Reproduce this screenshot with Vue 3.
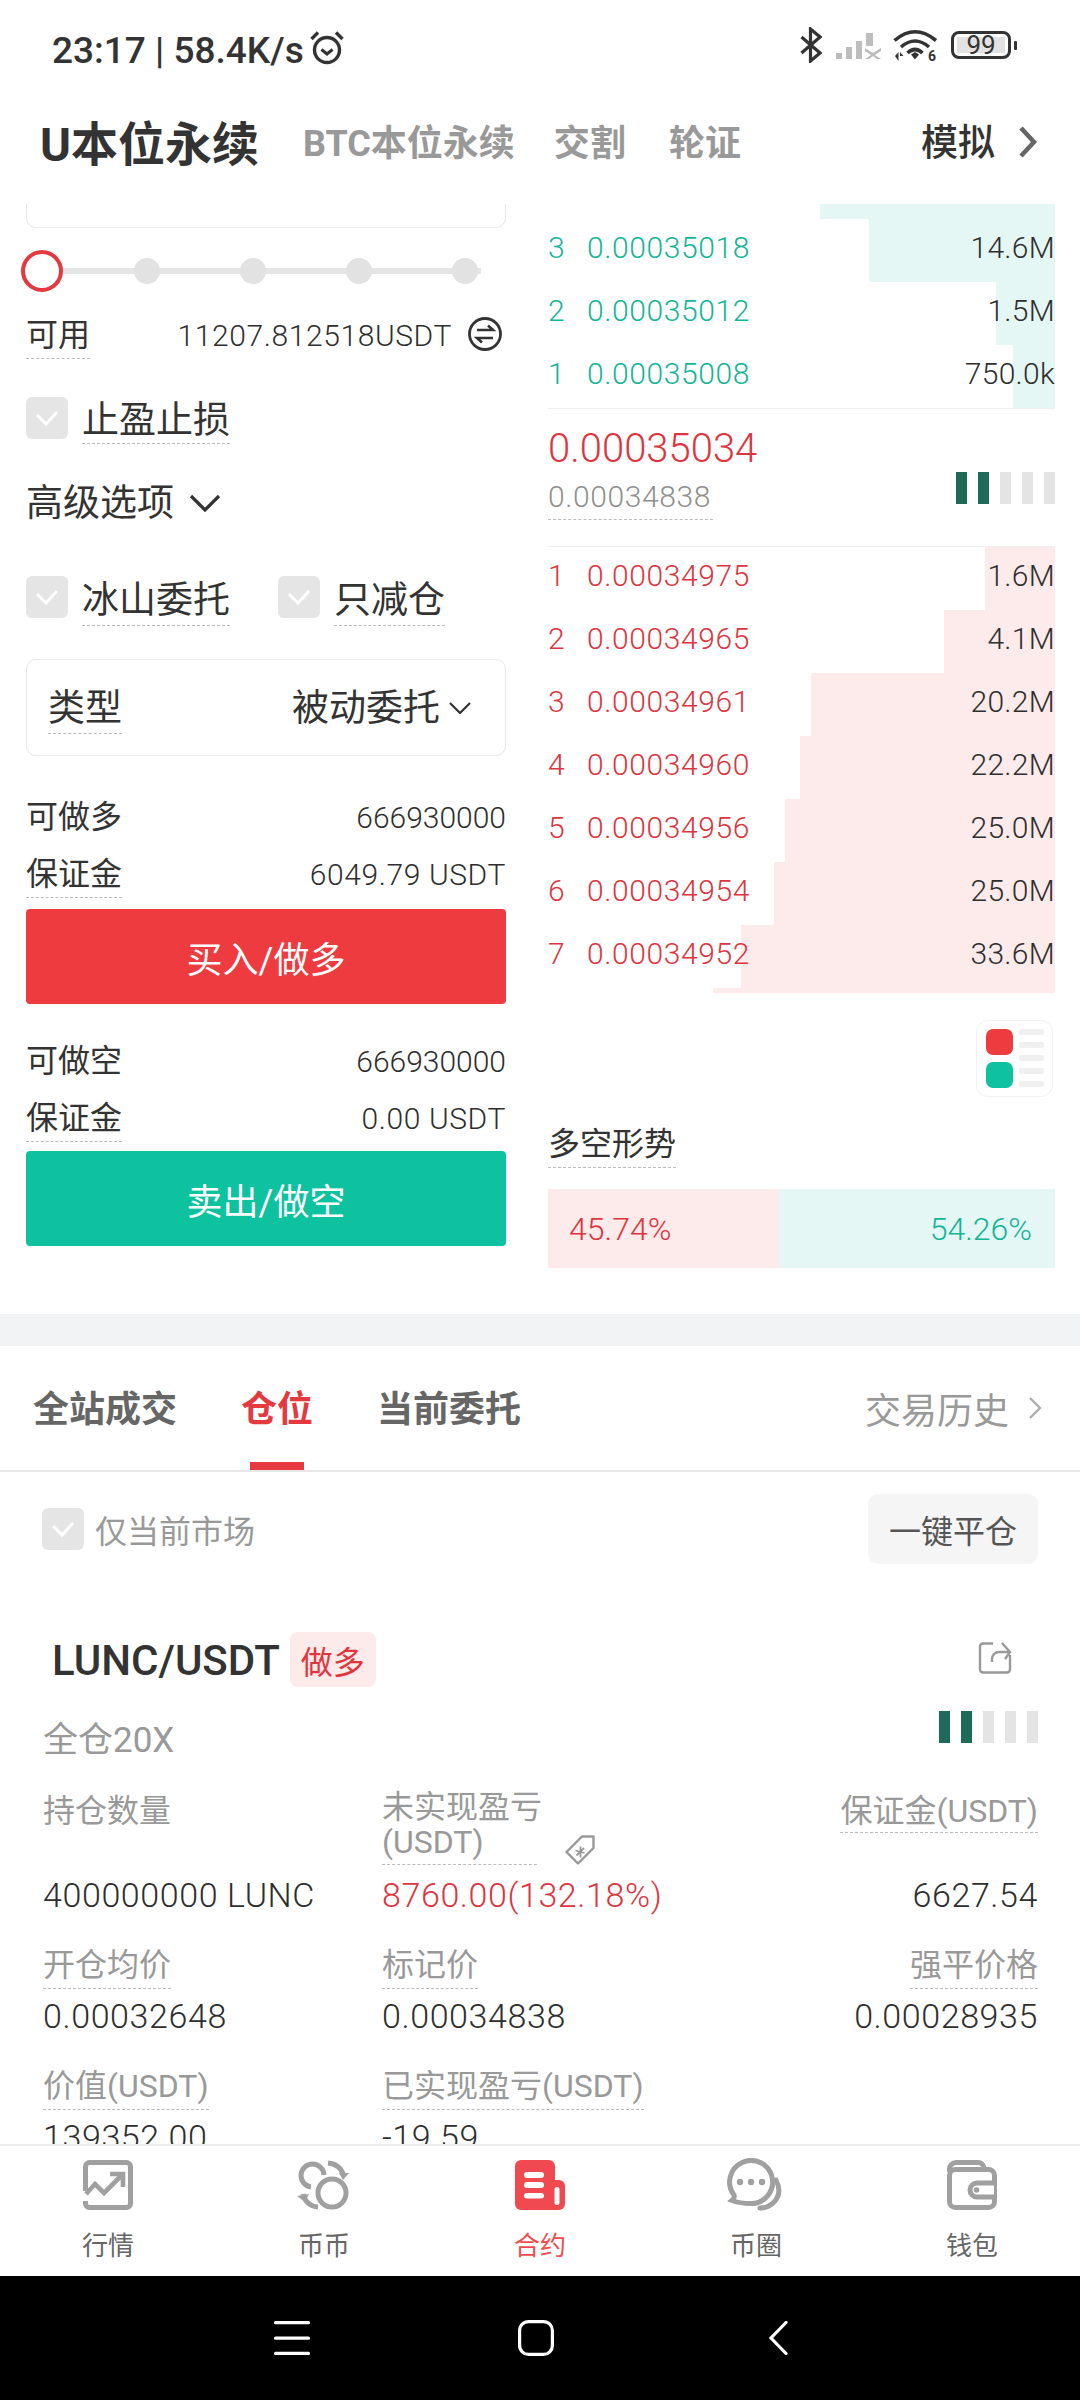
<script setup>
const asks = [
  { i: 3, p: '0.00035018', v: '14.6M', w: 186 },
  { i: 2, p: '0.00035012', v: '1.5M', w: 59 },
  { i: 1, p: '0.00035008', v: '750.0k', w: 42 },
]
const bids = [
  { i: 1, p: '0.00034975', v: '1.6M', w: 70 },
  { i: 2, p: '0.00034965', v: '4.1M', w: 111 },
  { i: 3, p: '0.00034961', v: '20.2M', w: 244 },
  { i: 4, p: '0.00034960', v: '22.2M', w: 255 },
  { i: 5, p: '0.00034956', v: '25.0M', w: 270 },
  { i: 6, p: '0.00034954', v: '25.0M', w: 281 },
  { i: 7, p: '0.00034952', v: '33.6M', w: 314 },
]
const barOn = [1, 2, 3, 4, 5]
const rows2 = [
  { l: '开仓均价', v: '0.00032648' },
  { l: '标记价', v: '0.00034838' },
  { l: '强平价格', v: '0.00028935' },
]
</script>

<template>
  <div class="phone">
    <div class="status">
      <span class="clock">23:17 | 58.4K/s</span>
      <svg class="alarm" width="36" height="36" viewBox="0 0 36 36" fill="none" stroke="#333" stroke-width="3.4">
        <circle cx="18" cy="20" r="12.5" />
        <path d="M12.5 19.5l5.5 4.5 5.5-4.5" stroke-width="3" />
        <path d="M2.5 9L9 2.5M33.5 9L27 2.5" stroke-width="3.4" />
      </svg>
      <span class="grow"></span>
      <svg class="bt" width="22" height="36" viewBox="0 0 22 36" fill="none" stroke="#333" stroke-width="3.2">
        <path d="M1.5 10L20 26 10.5 34V2l9.5 8L1.5 26" />
      </svg>
      <svg class="sig" width="46" height="28" viewBox="0 0 46 28" fill="#bdbdbd">
        <rect x="0" y="21" width="6" height="6" />
        <rect x="10" y="15" width="6" height="12" />
        <rect x="20" y="9" width="6" height="18" />
        <rect x="30" y="1" width="7" height="13" />
        <path d="M29 16l8 5 8-5v3l-6 4 6 4h-4l-4-3-4 3h-4l6-4-6-4z" />
      </svg>
      <svg class="wifi" width="45" height="36" viewBox="0 0 45 36" fill="none" stroke="#333" stroke-width="3.6">
        <path d="M1.5 11.500Q22-6 43 11.500" />
        <path d="M8 18Q22 6 36 18" />
        <path d="M14.500 24Q22 17 29.500 24" />
        <path d="M18 25.500l4 5 4-5-4-2.500z" fill="#333" stroke="none" />
        <path d="M2 27l3.500-4v9zM7 23l3.500 4-3.500 0v5z" fill="#333" stroke="none" />
        <text x="35" y="32" font-size="14" font-weight="700" fill="#333" stroke="none" font-family="Roboto, sans-serif">6</text>
      </svg>
      <div class="batt"><span class="batt-in">99</span></div>
      <span class="batt-tip"></span>
    </div>

    <div class="header">
      <span class="h-main">U本位永续</span>
      <span class="h-sub h1">BTC本位永续</span>
      <span class="h-sub h2">交割</span>
      <span class="h-sub h3">轮证</span>
      <span class="grow"></span>
      <span class="h-sim">模拟</span>
      <svg class="h-chev" width="20" height="32" viewBox="0 0 20 32" fill="none" stroke="#666" stroke-width="4.500">
        <path d="M3 2l13 14L3 30" />
      </svg>
    </div>

    <div class="scroll">
      <div class="trade">
        <div class="left">
          <div class="input-stub"></div>

          <div class="slider">
            <span class="track"></span>
            <span class="thumb"></span>
            <span v-for="n in 4" :key="n" class="dot"></span>
          </div>

          <div class="row avail">
            <span class="dash lbl32">可用</span>
            <span class="grow"></span>
            <span class="num">11207.812518USDT</span>
            <svg class="swap" width="36" height="36" viewBox="0 0 36 36" fill="none" stroke="#333" stroke-width="2.800">
              <circle cx="18" cy="18" r="15.500" />
              <path d="M10 14h16l-5-4.500M26 22H10l5 4.500" stroke-width="2.600" />
            </svg>
          </div>

          <div class="row tp">
            <span class="check"><svg width="24" height="18" viewBox="0 0 24 18" fill="none" stroke="#fff" stroke-width="3"><path d="M2 6l9 9 11-12" /></svg></span>
            <span class="dash lbl36 ml">止盈止损</span>
          </div>

          <div class="row adv">
            <span class="lbl36">高级选项</span>
            <svg class="adv-chev" width="32" height="18" viewBox="0 0 32 18" fill="none" stroke="#333" stroke-width="3.200"><path d="M2 2l14 14L30 2" /></svg>
          </div>

          <div class="row opts">
            <span class="check"><svg width="24" height="18" viewBox="0 0 24 18" fill="none" stroke="#fff" stroke-width="3"><path d="M2 6l9 9 11-12" /></svg></span>
            <span class="dash lbl36 ml pb">冰山委托</span>
            <span class="check second"><svg width="24" height="18" viewBox="0 0 24 18" fill="none" stroke="#fff" stroke-width="3"><path d="M2 6l9 9 11-12" /></svg></span>
            <span class="dash lbl36 ml pb">只减仓</span>
          </div>

          <div class="select">
            <span class="dash lbl36 pb">类型</span>
            <span class="grow"></span>
            <span class="lbl36 sel-val">被动委托</span>
            <svg class="sel-chev" width="22" height="12" viewBox="0 0 22 12" fill="none" stroke="#333" stroke-width="2.200"><path d="M1 1l10 10L21 1" /></svg>
          </div>

          <div class="row stat first">
            <span class="lbl32">可做多</span>
            <span class="grow"></span>
            <span class="num tight">666930000</span>
          </div>
          <div class="row stat">
            <span class="dash lbl32">保证金</span>
            <span class="grow"></span>
            <span class="num">6049.79 USDT</span>
          </div>
          <div class="btn buy">买入/做多</div>

          <div class="row stat second-first">
            <span class="lbl32">可做空</span>
            <span class="grow"></span>
            <span class="num tight">666930000</span>
          </div>
          <div class="row stat">
            <span class="dash lbl32">保证金</span>
            <span class="grow"></span>
            <span class="num">0.00 USDT</span>
          </div>
          <div class="btn sell">卖出/做空</div>
        </div>

        <div class="right">
          <div class="book-top"><span class="depth g" style="width: 235px"></span></div>
          <div v-for="r in asks" :key="'a' + r.i" class="book-row">
            <span class="depth g" :style="{ width: r.w + 'px' }"></span>
            <span class="idx green">{{ r.i }}</span>
            <span class="price green">{{ r.p }}</span>
            <span class="grow"></span>
            <span class="vol">{{ r.v }}</span>
          </div>

          <div class="mid">
            <div class="mid-left">
              <div class="last">0.00035034</div>
              <div class="mark"><span class="mark-in">0.00034838</span></div>
            </div>
            <div class="bars">
              <span v-for="n in barOn" :key="n" class="bar" :class="{ on: n < 3 }"></span>
            </div>
          </div>

          <div v-for="r in bids" :key="'b' + r.i" class="book-row">
            <span class="depth r" :style="{ width: r.w + 'px' }"></span>
            <span class="idx red">{{ r.i }}</span>
            <span class="price red">{{ r.p }}</span>
            <span class="grow"></span>
            <span class="vol">{{ r.v }}</span>
          </div>
          <div class="book-end"><span class="depth r" style="width: 342px"></span></div>

          <div class="toggle-wrap">
            <div class="toggle">
              <div class="t-sq">
                <span class="sq red-bg"></span>
                <span class="sq green-bg"></span>
              </div>
              <div class="t-lines">
                <span v-for="n in 5" :key="n" class="t-line"></span>
              </div>
            </div>
          </div>

          <div class="trend-label"><span class="dash lbl32">多空形势</span></div>
          <div class="trend">
            <div class="trend-l">45.74%</div>
            <div class="trend-r">54.26%</div>
          </div>
        </div>
      </div>

      <div class="band"></div>

      <div class="tabs">
        <span class="tab">全站成交</span>
        <span class="tab active">仓位</span>
        <span class="tab">当前委托</span>
        <span class="grow"></span>
        <span class="hist">交易历史</span>
        <svg class="hist-chev" width="14" height="24" viewBox="0 0 14 24" fill="none" stroke="#aaa" stroke-width="2.200"><path d="M2 2l10 10L2 22" /></svg>
      </div>

      <div class="filter">
        <span class="check"><svg width="24" height="18" viewBox="0 0 24 18" fill="none" stroke="#fff" stroke-width="3"><path d="M2 6l9 9 11-12" /></svg></span>
        <span class="filter-text">仅当前市场</span>
        <span class="grow"></span>
        <span class="close-all">一键平仓</span>
      </div>

      <div class="pos">
        <div class="pos-head">
          <span class="pair">LUNC/USDT</span>
          <span class="tag">做多</span>
          <span class="grow"></span>
          <svg class="share" width="34" height="34" viewBox="0 0 34 34" fill="none" stroke="#999" stroke-width="2.400">
            <path d="M15 3.500H5a3 3 0 0 0-3 3v23a3 3 0 0 0 3 3h24a3 3 0 0 0 3-3V15" />
            <path d="M14 22v-3a7 7 0 0 1 7-7h10M24 3l8 9-5 7" />
          </svg>
        </div>
        <div class="pos-sub">
          <span class="lever">全仓20X</span>
          <span class="grow"></span>
          <div class="bars small">
            <span v-for="n in barOn" :key="n" class="bar" :class="{ on: n < 3 }"></span>
          </div>
        </div>

        <div class="grid tall">
          <div class="cell">
            <div class="lab-box"><span class="lab">持仓数量</span></div>
            <div class="val">400000000 LUNC</div>
          </div>
          <div class="cell">
            <div class="lab-box">
              <span class="lab dashed wide">未实现盈亏<br />(USDT)</span>
              <svg class="ticket" width="30" height="30" viewBox="0 0 30 30" fill="none" stroke="#999" stroke-width="2.400">
                <path d="M17 1.500h11.500V13L13 28.500 1.500 17z" stroke-linejoin="round" />
                <path d="M10.500 15.500l9 2.500M15.500 11.500l0 11M11.500 20.500l7.500-7.500" stroke-width="1.800" />
              </svg>
            </div>
            <div class="val redv">8760.00(132.18%)</div>
          </div>
          <div class="cell end">
            <div class="lab-box"><span class="lab dashed">保证金(USDT)</span></div>
            <div class="val">6627.54</div>
          </div>
        </div>

        <div class="grid">
          <div v-for="(c, i) in rows2" :key="c.l" class="cell" :class="{ end: i === 2 }">
            <div class="lab-box"><span class="lab dashed">{{ c.l }}</span></div>
            <div class="val">{{ c.v }}</div>
          </div>
        </div>

        <div class="grid">
          <div class="cell">
            <div class="lab-box"><span class="lab dashed">价值(USDT)</span></div>
            <div class="val">139352.00</div>
          </div>
          <div class="cell">
            <div class="lab-box"><span class="lab dashed">已实现盈亏(USDT)</span></div>
            <div class="val">-19.59</div>
          </div>
        </div>
      </div>
    </div>

    <div class="tabbar">
      <div class="nav-item">
        <svg width="50" height="50" viewBox="0 0 50 50" fill="none" stroke="#a0a0a0" stroke-width="5">
          <path d="M2.500 31V6.500a4 4 0 0 1 4-4h37a4 4 0 0 1 4 4v37a4 4 0 0 1-4 4h-37a4 4 0 0 1-4-4V41" />
          <path d="M3 34l9-10 9 9 18-18M27 14h13v13" stroke-width="4.600" />
        </svg>
        <span>行情</span>
      </div>
      <div class="nav-item">
        <svg width="54" height="50" viewBox="0 0 54 50" fill="none" stroke="#a0a0a0" stroke-width="5">
          <circle cx="35" cy="33" r="14" />
          <path d="M27 15A11.500 11.500 0 1 0 14 27" />
          <path d="M31 3q12 1 16 13" />
          <path d="M42 13l10 0-6 7z" fill="#a0a0a0" stroke="none" />
          <path d="M6 34q3 12 15 13" />
          <path d="M0 36l12-2-4 8z" fill="#a0a0a0" stroke="none" />
        </svg>
        <span>币币</span>
      </div>
      <div class="nav-item">
        <svg class="active-ic" width="50" height="50" viewBox="0 0 50 50">
          <path d="M6 0h28a6 6 0 0 1 6 6v14h4a6 6 0 0 1 6 6v18a6 6 0 0 1-6 6H6a6 6 0 0 1-6-6V6a6 6 0 0 1 6-6z" fill="#f0494f" />
          <g fill="#fff">
            <rect x="9" y="12" width="20" height="6" rx="3" />
            <rect x="9" y="22" width="20" height="6" rx="3" />
            <rect x="9" y="33" width="20" height="5.500" rx="2.750" />
            <rect x="39.500" y="27" width="5" height="18" rx="2.500" />
          </g>
        </svg>
        <span class="active-t">合约</span>
      </div>
      <div class="nav-item">
        <svg class="nudge" width="60" height="54" viewBox="0 0 60 54" fill="none" stroke="#a0a0a0" stroke-width="5">
          <path d="M8 37A21.500 21.500 0 1 1 25 45.500Q14 45.500 6 42.500Q9 40 8 37z" />
          <path d="M50 22Q57 36 47 45Q42 50 34 50" stroke-linecap="round" />
          <g fill="#a0a0a0" stroke="none">
            <circle cx="14" cy="24" r="3.200" />
            <circle cx="25" cy="24" r="3.200" />
            <circle cx="36" cy="24" r="3.200" />
          </g>
        </svg>
        <span>币圈</span>
      </div>
      <div class="nav-item">
        <svg width="50" height="50" viewBox="0 0 50 50" fill="none" stroke="#a0a0a0" stroke-width="5">
          <path d="M2.500 12V9a6.500 6.500 0 0 1 6.500-6.500h22a6 6 0 0 1 6 6V10" />
          <rect x="2.500" y="9.500" width="45" height="38" rx="6" />
          <path d="M47 23H30a7 7 0 0 0 0 14h17" fill="#fff" />
          <circle cx="29.500" cy="30" r="2.800" fill="#a0a0a0" stroke="none" />
        </svg>
        <span>钱包</span>
      </div>
    </div>

    <div class="sysnav">
      <svg width="36" height="34" viewBox="0 0 36 34" fill="#fff">
        <rect x="0" y="0" width="36" height="3.200" rx="1.500" />
        <rect x="0" y="15.500" width="36" height="3.200" rx="1.500" />
        <rect x="0" y="30.800" width="36" height="3.200" rx="1.500" />
      </svg>
      <svg class="home" width="36" height="36" viewBox="0 0 36 36" fill="none" stroke="#fff" stroke-width="3.200">
        <rect x="1.600" y="1.600" width="32.800" height="32.800" rx="9" />
      </svg>
      <svg class="back" width="20" height="34" viewBox="0 0 20 34" fill="none" stroke="#fff" stroke-width="3.200">
        <path d="M18 1.500L3 17l15 15.500" stroke-linecap="round" />
      </svg>
    </div>
  </div>
</template>

<style>
html, body { margin: 0; background: #fff; }
</style>

<style scoped>
.phone {
  width: 1080px;
  height: 2400px;
  display: flex;
  flex-direction: column;
  overflow: hidden;
  background: #fff;
  color: #333;
  font-family: Roboto, "Noto Sans CJK SC", sans-serif;
}
.grow { flex: 1; }

.status { height: 90px; flex: none; display: flex; align-items: center; padding: 10px 63px 0 52px; box-sizing: border-box; }
.clock { font-size: 37px; font-weight: 500; color: #333; white-space: nowrap; }
.alarm { margin-left: 5px; margin-top: -4px; }
.bt { margin-top: -10px; }
.sig { margin-left: 14px; margin-top: -9px; }
.wifi { margin-left: 11px; margin-top: -7px; }
.batt { width: 60px; height: 28px; margin-left: 13px; margin-top: -10px; border: 3px solid #333; border-radius: 8px; box-sizing: border-box; display: flex; align-items: center; justify-content: center; background: linear-gradient(#e2e2e2, #e2e2e2) 3px 3px / 48px 16px no-repeat; }
.batt-in { font-size: 26px; line-height: 22px; color: #333; }
.batt-tip { width: 3px; height: 9px; margin-left: 3px; margin-top: -10px; background: #333; border-radius: 1px; }

.header { height: 114px; flex: none; display: flex; align-items: center; padding: 0 42px 14px 40px; box-sizing: border-box; }
.h-main { font-size: 47px; font-weight: 700; color: #333; white-space: nowrap; }
.h-sub { font-size: 36px; font-weight: 700; color: #999; white-space: nowrap; }
.h1 { margin-left: 44px; }
.h2 { margin-left: 39px; }
.h3 { margin-left: 43px; }
.h-sim { font-size: 37px; font-weight: 500; color: #333; }
.h-chev { margin-left: 23px; margin-top: 4px; }

.scroll { flex: 1; min-height: 0; overflow: hidden; }
.trade { height: 1110px; display: flex; padding: 0 25px 0 26px; box-sizing: border-box; }
.left { width: 480px; flex: none; }
.right { width: 507px; flex: none; margin-left: 42px; }

.row { display: flex; align-items: flex-start; }
.dash { display: inline-block; border-bottom: 1px dashed #bbb; }
.lbl32 { font-size: 32px; line-height: 45px; color: #333; white-space: nowrap; }
.lbl36 { font-size: 37px; line-height: 45px; color: #333; white-space: nowrap; }
.ml { margin-left: 14px; }
.pb { padding-top: 2px; padding-bottom: 2px; }
.num { font-size: 30px; line-height: 45px; color: #2e2e2e; font-weight: 300; letter-spacing: 0.6px; white-space: nowrap; }
.num.tight { letter-spacing: 0; }

.input-stub { height: 24px; border: 1px solid #e8e8e8; border-top: 0; border-radius: 0 0 10px 10px; box-sizing: border-box; }

.slider { position: relative; margin: 22px 0 0 -5px; height: 42px; display: flex; align-items: center; gap: 80px; }
.track { position: absolute; left: 20px; width: 440px; top: 18px; height: 6px; background: #e5e5e5; }
.thumb { position: relative; width: 42px; height: 42px; box-sizing: border-box; border: 4px solid #e5383f; border-radius: 50%; background: #fff; margin-right: -9.5px; flex: none; }
.dot { position: relative; width: 26px; height: 26px; border-radius: 50%; background: #e2e2e2; flex: none; }

.avail { margin-top: 21px; }
.swap { margin: 3px 3px 0 15px; }
.tp { margin-top: 38px; }
.tp .lbl36 { position: relative; top: 1px; }
.check { width: 42px; height: 42px; flex: none; background: #e5e5e5; border-radius: 6px; display: flex; align-items: center; justify-content: center; }
.adv { margin-top: 38px; }
.adv-chev { margin-left: 15px; margin-top: 13px; }
.opts { margin-top: 50px; }
.second { margin-left: 48px; }
.select { margin-top: 33px; height: 97px; box-sizing: border-box; border: 1px solid #e8e8e8; border-radius: 10px; padding: 3px 34px 0 21px; display: flex; align-items: center; }
.sel-val { position: relative; top: -1px; }
.sel-chev { margin-left: 9px; margin-top: -2px; }
.stat { height: 46px; margin-top: 11px; }
.stat.first { margin-top: 39px; }
.stat.second-first { margin-top: 35px; }
.btn { height: 95px; margin-top: 11px; border-radius: 4px; color: #fff; font-size: 36px; display: flex; align-items: center; justify-content: center; }
.buy { background: #ee3b40; }
.sell { background: #0fc29f; margin-top: 9px; }

.book-top { position: relative; height: 15px; }
.book-end { position: relative; height: 5px; }
.book-row { position: relative; height: 63px; display: flex; align-items: center; padding-bottom: 6px; box-sizing: border-box; font-size: 30px; }
.depth { position: absolute; right: 0; top: 0; bottom: 0; }
.depth.g { background: #e4f7f5; }
.depth.r { background: #fdeaea; }
.idx { position: relative; width: 39px; font-weight: 300; }
.price { position: relative; letter-spacing: 0.6px; font-weight: 300; }
.vol { position: relative; color: #2e2e2e; font-weight: 300; letter-spacing: 0.3px; }
.green { color: #13b596; }
.red { color: #dd3540; }

.mid { height: 139px; box-sizing: border-box; border-top: 1px solid #eee; border-bottom: 1px solid #eee; display: flex; justify-content: space-between; }
.last { font-size: 40px; font-weight: 300; line-height: 44px; margin-top: 18px; color: #dd3540; }
.mark { margin-top: 4px; font-size: 30px; font-weight: 300; color: #8f8f8f; letter-spacing: 0.6px; }
.mark-in { display: inline-block; line-height: 44px; padding-right: 2px; border-bottom: 1px dashed #bbb; }
.bars { display: flex; gap: 11px; margin-top: 63px; height: 32px; }
.bar { width: 11px; background: #e4e4e4; }
.bar.on { background: #1f6b5a; }

.toggle-wrap { display: flex; justify-content: flex-end; margin-top: 27px; padding-right: 2px; }
.toggle { width: 77px; height: 77px; box-sizing: border-box; border: 1px solid #f2f2f2; border-radius: 12px; display: flex; padding: 8px 9px; gap: 6px; }
.t-sq { display: flex; flex-direction: column; gap: 7px; }
.sq { width: 27px; height: 27px; border-radius: 7px; }
.red-bg { background: #ee3b40; }
.green-bg { background: #0fc29f; }
.t-lines { display: flex; flex-direction: column; gap: 7px; }
.t-line { width: 25px; height: 6px; border-radius: 2px; background: #f0f0f0; }

.trend-label { margin-top: 25px; }
.trend { margin-top: 21px; height: 79px; display: flex; font-size: 32px; font-weight: 300; align-items: stretch; }
.trend-l { width: 231px; background: #fdeaea; color: #dd3540; padding-left: 21px; box-sizing: border-box; display: flex; align-items: center; }
.trend-r { flex: 1; background: #e4f7f5; color: #13b596; padding-right: 23px; box-sizing: border-box; display: flex; align-items: center; justify-content: flex-end; }

.band { height: 32px; background: #f2f3f5; }
.tabs { height: 126px; box-sizing: border-box; border-bottom: 2px solid #e8e8e8; display: flex; align-items: center; padding: 0 38px 0 33px; gap: 64px; }
.tab { position: relative; font-size: 36px; font-weight: 700; color: #666; white-space: nowrap; line-height: 128px; height: 124px; }
.tab.active { color: #e5383f; }
.tab.active::after { content: ""; position: absolute; left: 9px; right: 9px; bottom: 0; height: 8px; background: #e5383f; }
.hist { font-size: 36px; color: #999; white-space: nowrap; margin-right: -45px; }

.filter { height: 108px; padding: 6px 42px 0; display: flex; align-items: center; box-sizing: border-box; }
.filter-text { font-size: 32px; color: #999; margin-left: 11px; white-space: nowrap; }
.close-all { width: 170px; height: 70px; background: #f5f5f5; border-radius: 10px; font-size: 32px; color: #555; display: flex; align-items: center; justify-content: center; }

.pos { padding: 52px 42px 0 43px; }
.pos-head { height: 55px; display: flex; align-items: center; }
.pair { font-size: 42px; font-weight: 500; color: #333; margin-left: 9px; white-space: nowrap; position: relative; top: 1px; }
.tag { height: 55px; width: 86px; margin-left: 10px; background: #fdeaea; border-radius: 8px; color: #e0373f; font-size: 32px; display: flex; align-items: center; justify-content: center; }
.share { margin: -6px 26px 0 0; }
.pos-sub { display: flex; align-items: flex-start; margin-top: 24px; height: 54px; }
.lever { font-size: 35px; line-height: 60px; color: #999; white-space: nowrap; }
.bars.small { margin-top: 0; }

.grid { display: grid; grid-template-columns: 339px 300px 1fr; margin-top: 25px; }
.cell { min-width: 0; }
.cell.end { text-align: right; }
.lab-box { height: 52px; display: block; }
.tall .lab-box { height: 83px; display: flex; align-items: flex-start; }
.tall .cell.end .lab-box { justify-content: flex-end; }
.lab { font-size: 32px; line-height: 46px; color: #999; white-space: nowrap; display: inline-block; }
.tall .lab { line-height: 42px; }
.lab.dashed { border-bottom: 1px dashed #bbb; }
.tall .lab.wide { line-height: 35px; width: 155px; padding-bottom: 4px; }
.ticket { margin-left: 28px; margin-top: 45px; }
.val { font-size: 34px; font-weight: 300; line-height: 44px; color: #2e2e2e; letter-spacing: 0.6px; white-space: nowrap; }
.redv { color: #dd3540; }

.tabbar { height: 132px; flex: none; box-sizing: border-box; border-top: 2px solid #eee; background: #fff; display: flex; padding-top: 14px; }
.nav-item { flex: 1; display: flex; flex-direction: column; align-items: center; color: #666; font-size: 26px; }
.nav-item svg { flex: none; }
.nav-item span { margin-top: 16px; line-height: 40px; }
.nav-item .active-t { color: #ef4c50; }
.nav-item .nudge { margin: -2px 0; }

.sysnav { height: 124px; flex: none; background: #000; display: flex; align-items: center; padding-left: 274px; box-sizing: border-box; }
.home { margin-left: 208px; }
.back { margin-left: 214px; }
</style>
